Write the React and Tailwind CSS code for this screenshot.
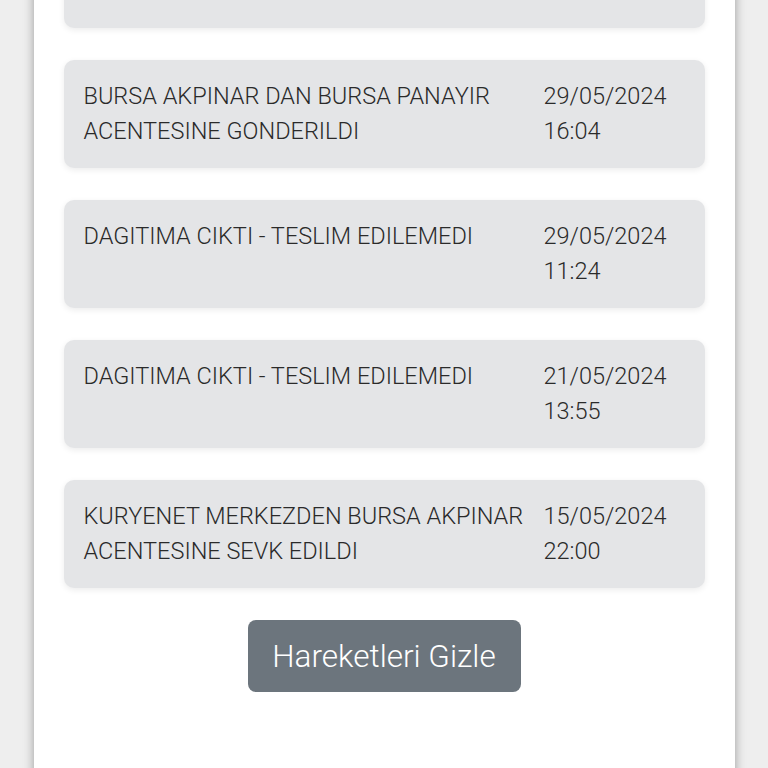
export default function App() {
  const items = [
    { text: "", date: "", time: "" },
    { text: "BURSA AKPINAR DAN BURSA PANAYIR ACENTESINE GONDERILDI", date: "29/05/2024", time: "16:04" },
    { text: "DAGITIMA CIKTI - TESLIM EDILEMEDI", date: "29/05/2024", time: "11:24" },
    { text: "DAGITIMA CIKTI - TESLIM EDILEMEDI", date: "21/05/2024", time: "13:55" },
    { text: "KURYENET MERKEZDEN BURSA AKPINAR ACENTESINE SEVK EDILDI", date: "15/05/2024", time: "22:00" },
  ];
  return (
    <div className="w-[768px] h-[768px] overflow-hidden bg-[#eeeeee] flex justify-center" style={{ fontFamily: "Roboto, 'Noto Sans', sans-serif" }}>
      <div className="w-[701px] h-[900px] -mt-[100px] bg-white shadow-[0_0_10px_rgba(0,0,0,0.35)] px-[30px] pt-[20px] flex flex-col">
        <div className="flex flex-col gap-[32px]">
          {items.map((it, i) => (
            <div key={i} className="h-[108px] rounded-[10px] bg-[#e4e5e7] shadow-[0_2px_6px_rgba(0,0,0,0.08)] pl-[20px] pr-[20px] pt-[19px] flex text-[23.5px] font-light leading-[35px] text-[#2a2a2a]">
              <div className="flex-1 pr-[16px]">{it.text}</div>
              <div className="w-[141px]">
                <div>{it.date}</div>
                <div>{it.time}</div>
              </div>
            </div>
          ))}
        </div>
        <div className="flex justify-center mt-[32px]">
          <button className="w-[273px] h-[72px] rounded-[8px] bg-[#6c757d] text-white text-[31.5px] font-light pt-[1px]">
            Hareketleri Gizle
          </button>
        </div>
      </div>
    </div>
  );
}
